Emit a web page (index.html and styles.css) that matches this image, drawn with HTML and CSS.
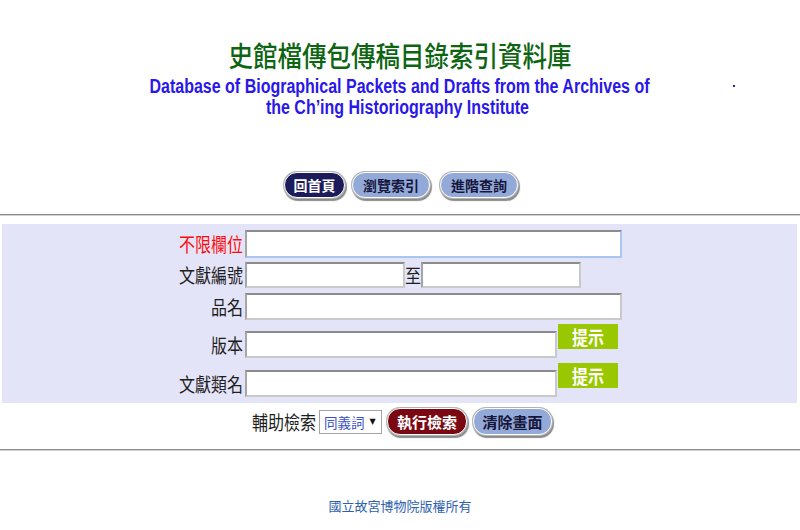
FILE: index.html
```html
<!DOCTYPE html>
<html lang="zh-Hant">
<head>
<meta charset="utf-8">
<title>史館檔傳包傳稿目錄索引資料庫</title>
<link rel="stylesheet" href="styles.css">
</head>
<body>
<header class="head">
  <h1 class="title-zh"><span>史館檔傳包傳稿目錄索引資料庫</span></h1>
  <div class="title-en">
    <div class="en-line"><span>Database of Biographical Packets and Drafts from the Archives of</span></div>
    <div class="en-line"><span>the Ch’ing Historiography Institute</span></div>
  </div>
  <span class="dot"></span>
</header>

<nav class="nav">
  <a class="pill pill-dark w61">回首頁</a>
  <a class="pill pill-light w78">瀏覽索引</a>
  <a class="pill pill-light w78 ml">進階查詢</a>
</nav>

<hr class="rule">

<form class="band">
  <div class="row r1">
    <label class="lbl h28"><span class="zh red">不限欄位</span></label>
    <input class="field focus w377 h28" type="text">
  </div>
  <div class="row r2">
    <label class="lbl h26"><span class="zh">文獻編號</span></label>
    <input class="field w160 h26" type="text">
    <span class="to h26"><span class="zh">至</span></span>
    <input class="field w160 h26" type="text">
  </div>
  <div class="row r3">
    <label class="lbl h27"><span class="zh">品名</span></label>
    <input class="field w377 h27" type="text">
  </div>
  <div class="row r4">
    <label class="lbl h27 low"><span class="zh">版本</span></label>
    <input class="field w312 h27 low" type="text">
    <a class="hint"><span class="zh">提示</span></a>
  </div>
  <div class="row r5">
    <label class="lbl h27 low"><span class="zh">文獻類名</span></label>
    <input class="field w312 h27 low" type="text">
    <a class="hint"><span class="zh">提示</span></a>
  </div>
</form>

<div class="actions">
  <span class="act-lbl"><span class="zh">輔助檢索</span></span>
  <span class="select"><span class="opt">同義詞</span><span class="arr">▼</span></span>
  <a class="pill pill-red w80">執行檢索</a>
  <a class="pill pill-light w79">清除畫面</a>
</div>

<hr class="rule rule2">

<footer class="foot">國立故宮博物院版權所有</footer>
</body>
</html>
```

FILE: styles.css
```css
html, body {
  margin: 0;
  padding: 0;
  background: #ffffff;
}
body {
  width: 800px;
  font-family: "Noto Sans CJK TC", "Noto Sans", sans-serif;
  color: #1e1e1e;
}

/* header */
.head {
  display: grid;
  grid-template-columns: 1fr 626px 1fr;
  padding-top: 40px;
}
.title-zh {
  grid-column: 1 / -1;
  grid-row: 1;
  margin: 0;
  height: 30px;
  line-height: 30px;
  text-align: center;
  font-family: "Noto Sans CJK TC", sans-serif;
  font-weight: 500;
  font-size: 24.5px;
  color: #0d6512;
}
.title-zh span {
  display: inline-block;
  transform: scaleY(1.15);
}
.title-en {
  grid-column: 2;
  grid-row: 2;
  margin-top: 6px;
  margin-right: 6px;
  font-family: "Liberation Sans", Arial, sans-serif;
  font-weight: bold;
  font-size: 20px;
  color: #2a17ea;
}
.en-line {
  height: 21px;
  line-height: 21px;
  text-align: center;
  white-space: nowrap;
}
.en-line span {
  display: inline-block;
  transform: scaleX(0.8);
}
.dot {
  grid-column: 3;
  grid-row: 2;
  justify-self: start;
  align-self: start;
  width: 2px;
  height: 2px;
  margin: 15px 0 0 20px;
  background: #1a2a9a;
}

/* navigation pills */
.nav {
  display: flex;
  justify-content: center;
  gap: 7px;
  margin-top: 54px;
  padding-left: 2px;
}
.pill {
  display: flex;
  align-items: center;
  justify-content: center;
  box-sizing: border-box;
  height: 26px;
  border-radius: 13px;
  border: 1px solid #ffffff;
  box-shadow: 0 0 0 1px #b4b4b4, 1px 2px 1px 1px #8a8a8a;
  font-family: "Noto Sans CJK TC", sans-serif;
  font-weight: bold;
  font-size: 14px;
  text-decoration: none;
  cursor: pointer;
}
.pill-dark { background: #1c1c5a; color: #ffffff; }
.pill-light { background: #93aad8; color: #16163c; }
.pill-red { background: #7a0812; color: #ffffff; height: 27px; font-size: 15px; }
.w61 { width: 61px; }
.w78 { width: 78px; }
.w79 { width: 79px; }
.w80 { width: 80px; }
.ml { margin-left: 3px; }

/* rules */
.rule {
  margin: 16px 0 0;
  height: 0;
  border: 0;
  border-top: 1px solid #8a8a8a;
  border-bottom: 1px solid #d2d2d2;
}
.rule2 { margin-top: 14px; }

/* form band */
.band {
  margin: 8px 3px 0 2px;
  padding: 6px 0;
  background: #e4e4f8;
}
.row {
  display: flex;
  align-items: flex-start;
}
.r2, .r4 { margin-top: 4px; }
.r3, .r5 { margin-top: 5px; }
.lbl {
  width: 241px;
  display: flex;
  align-items: center;
  justify-content: flex-end;
  font-size: 16px;
  color: #1e1e1e;
}
.zh {
  display: inline-block;
  transform: scaleY(1.18);
}
.red { color: #ff0a0a; }
.h26 { height: 26px; }
.h27 { height: 27px; }
.h28 { height: 28px; }
.field {
  box-sizing: border-box;
  margin: 0 0 0 2px;
  padding: 0 3px;
  background: #ffffff;
  border-style: solid;
  border-width: 2px;
  border-color: #8c8c8c #c9c9c9 #c9c9c9 #a6a6a6;
  font-size: 14px;
  outline: none;
}
.field.focus {
  border-color: #8c8c8c #a9c6f2 #a9c6f2 #a6a6a6;
}
.lbl.low, .field.low { margin-top: 7px; }
.w377 { width: 377px; }
.w312 { width: 312px; }
.w160 { width: 160px; }
.to {
  width: 16px;
  display: flex;
  align-items: center;
  font-size: 16px;
}
.r2 .to + .field { margin-left: 0; }
.hint {
  box-sizing: border-box;
  width: 60px;
  height: 25px;
  margin-left: 1px;
  display: flex;
  align-items: center;
  justify-content: center;
  background: #99c800;
  color: #ffffff;
  font-weight: bold;
  font-size: 16px;
  cursor: pointer;
}

/* actions row */
.actions {
  display: flex;
  justify-content: center;
  align-items: center;
  height: 27px;
  margin-top: 5px;
  padding-left: 4px;
}
.act-lbl {
  font-size: 16px;
  margin-right: 3px;
}
.select {
  box-sizing: border-box;
  width: 63px;
  height: 24px;
  display: flex;
  align-items: center;
  padding-left: 4px;
  margin-right: 5px;
  background: #ffffff;
  border: 1px solid #a4a4a4;
}
.opt {
  font-size: 13.5px;
  color: #3a52c4;
}
.arr {
  font-family: "DejaVu Sans", sans-serif;
  font-size: 8px;
  color: #111111;
  margin-left: 5px;
}
.actions .pill-red { margin-right: 6px; }
.actions .pill-light { height: 27px; font-size: 15px; }

/* footer */
.foot {
  margin-top: 47px;
  text-align: center;
  font-size: 13px;
  line-height: 16px;
  color: #2e62ae;
}
```
